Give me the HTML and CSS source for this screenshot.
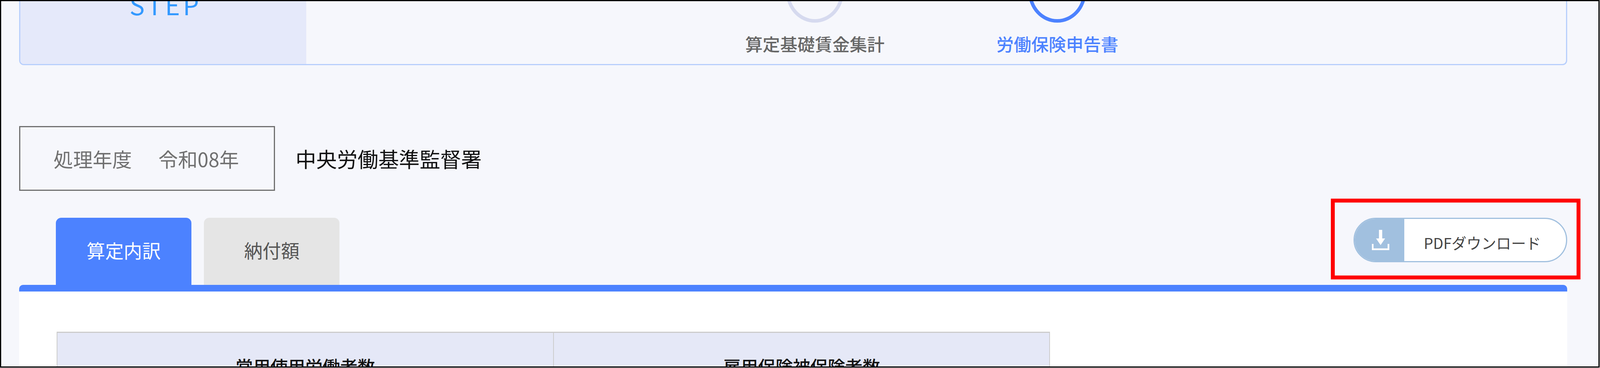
FILE: index.html
```html
<!DOCTYPE html>
<html lang="ja">
<head>
<meta charset="utf-8">
<title>労働保険申告書</title>
<link rel="stylesheet" href="styles.css">
</head>
<body>
<div class="frame">
  <section class="stepper">
    <div class="step-head"><span class="step-title">STEP</span></div>
    <ol class="step-list">
      <li class="step"><span class="step-circle"></span><span class="step-label">算定基礎賃金集計</span></li>
      <li class="step step-active"><span class="step-circle"></span><span class="step-label">労働保険申告書</span></li>
    </ol>
  </section>

  <section class="info-row">
    <div class="year-box"><span>処理年度</span><span class="year-value">令和08年</span></div>
    <div class="office">中央労働基準監督署</div>
  </section>

  <section class="tab-row">
    <div class="tabs">
      <button class="tab tab-active">算定内訳</button>
      <button class="tab">納付額</button>
    </div>
    <button class="pdf-button">
      <span class="pdf-icon">
        <svg class="pdf-glyph" viewBox="0 0 48 52" preserveAspectRatio="none" aria-hidden="true">
          <path d="M19.500 0h9v22h8L24 39 11.500 22h8z" fill="#fff"/>
          <path d="M2.300 36v13.700h43.400V36" fill="none" stroke="#fff" stroke-width="4.600"/>
        </svg>
      </span>
      <span class="pdf-text">PDFダウンロード</span>
    </button>
    <div class="highlight"></div>
  </section>

  <section class="panel">
    <table class="summary">
      <tr>
        <th>常用使用労働者数</th>
        <th>雇用保険被保険者数</th>
      </tr>
    </table>
  </section>
</div>
</body>
</html>
```
FILE: styles.css
```css
/* All horizontal sizes and type follow the window width; --u is one unit of a 4408-wide design. */
:root { --u: calc(100vw / 4408); }

* { box-sizing: border-box; }

html, body {
  margin: 0;
  height: 100%;
  overflow: hidden;
}

body {
  background: #fff;
  font-family: "Noto Sans CJK JP", "Noto Sans", sans-serif;
}

.frame {
  width: calc(100vw - 1px);
  height: 942px;
  border: 3px solid #000;
  background: #f6f7fc;
  overflow: hidden;
  padding: 0 calc(var(--u) * 86) 0 calc(var(--u) * 49);
}

/* stepper */
.stepper {
  display: flex;
  height: 164px;
  border: 3px solid #b8cffc;
  border-top: 0;
  border-radius: 0 0 12px 12px;
  overflow: hidden;
}

.step-head {
  width: calc(var(--u) * 788);
  height: 100%;
  background: #e5e9fa;
  text-align: center;
  flex: none;
  padding-left: calc(var(--u) * 14);
}

.step-title {
  display: block;
  margin-top: -34px;
  font-size: calc(var(--u) * 70);
  line-height: 84px;
  letter-spacing: calc(var(--u) * 8);
  color: #3399ff;
}

.step-list {
  flex: 1;
  display: flex;
  justify-content: center;
  list-style: none;
  margin: 0;
  padding: 0;
}

.step {
  width: calc(var(--u) * 668);
  display: flex;
  flex-direction: column;
  align-items: center;
}

.step-circle {
  width: calc(var(--u) * 160);
  height: 160px;
  margin-top: -105px;
  border: 9px solid #d6daef;
  border-radius: 50%;
  background: #f6f7fc;
}

.step-label {
  margin-top: 24px;
  font-size: calc(var(--u) * 48);
  line-height: 60px;
  font-weight: 500;
  color: #666;
}

.step-active .step-circle { border-color: #4c82ff; }
.step-active .step-label { color: #4c82ff; }

/* info row */
.info-row {
  display: flex;
  align-items: center;
  margin-top: 156px;
}

.year-box {
  width: calc(var(--u) * 705);
  height: 166px;
  padding-left: calc(var(--u) * 92);
  border: 3px solid #707070;
  font-size: calc(var(--u) * 54);
  line-height: 160px;
  color: #707070;
}

.year-value { margin-left: calc(var(--u) * 73); }

.office {
  margin-left: calc(var(--u) * 57);
  font-size: calc(var(--u) * 57);
  line-height: 80px;
  color: #111;
}

/* tabs */
.tab-row {
  position: relative;
  display: flex;
  justify-content: space-between;
  align-items: flex-start;
  margin-top: 69px;
}

.tabs {
  display: flex;
  gap: calc(var(--u) * 35);
  padding-left: calc(var(--u) * 102);
}

.tab {
  width: calc(var(--u) * 373);
  height: 172px;
  padding: 0 0 8px;
  border: 0;
  border-radius: 14px 14px 0 0;
  background: #e5e5e5;
  font: inherit;
  font-size: calc(var(--u) * 51);
  color: #555;
  display: flex;
  align-items: center;
  justify-content: center;
}

.tab-active {
  background: #4c82ff;
  color: #fff;
}

.pdf-button {
  display: flex;
  width: calc(var(--u) * 589);
  height: 114px;
  padding: 0;
  border: 3px solid #a1c0df;
  border-radius: 57px;
  background: #fff;
  font: inherit;
  overflow: hidden;
}

.pdf-icon {
  width: calc(var(--u) * 137);
  flex: none;
  background: #a1c0df;
  display: flex;
  align-items: center;
  justify-content: center;
  padding-left: calc(var(--u) * 6);
}

.pdf-glyph {
  width: calc(var(--u) * 48);
  height: 52px;
}

.pdf-text {
  flex: 1;
  text-align: center;
  font-size: calc(var(--u) * 41);
  line-height: 122px;
  color: #444;
  padding-right: calc(var(--u) * 16);
}

.highlight {
  position: absolute;
  right: calc(var(--u) * -37);
  top: -49px;
  width: calc(var(--u) * 688);
  height: 207px;
  border: 10px solid #f00;
  pointer-events: none;
}

/* panel */
.panel {
  height: 400px;
  background: #fff;
  border-top: 17px solid #4c82ff;
  border-radius: 10px 10px 0 0;
  padding: 103px 0 0 calc(var(--u) * 104);
}

.summary {
  width: calc(var(--u) * 2737);
  table-layout: fixed;
  border-collapse: collapse;
}

.summary th {
  background: #e5e8f7;
  border: 2px solid #ccc;
  border-top-width: 3px;
  padding: 53px 0 40px;
  font-size: calc(var(--u) * 48);
  line-height: 64px;
  font-weight: 500;
  color: #111;
}
```
